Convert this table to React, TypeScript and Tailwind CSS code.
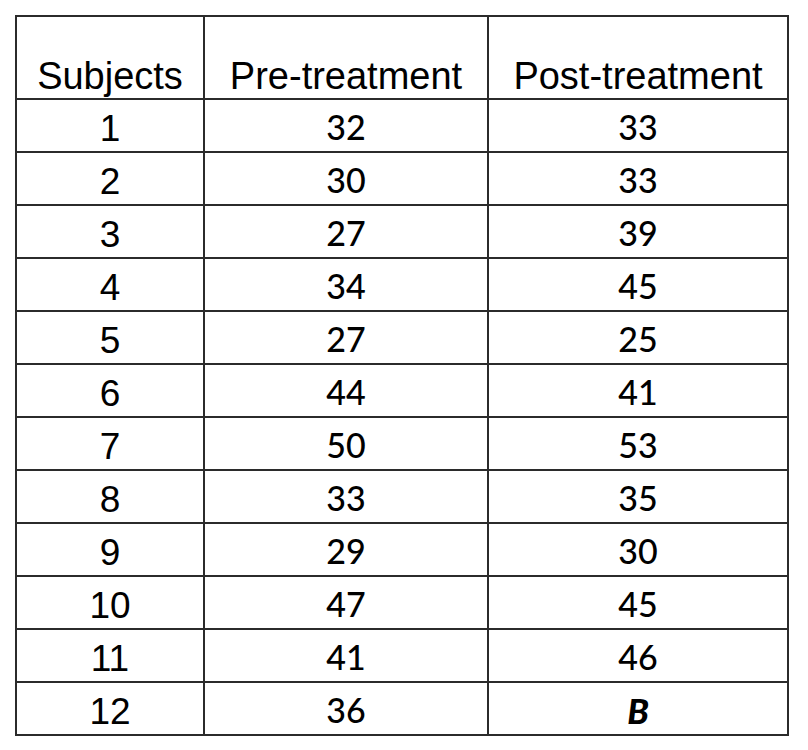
import React from "react";

const rows: [string, string, string][] = [
  ["1", "32", "33"],
  ["2", "30", "33"],
  ["3", "27", "39"],
  ["4", "34", "45"],
  ["5", "27", "25"],
  ["6", "44", "41"],
  ["7", "50", "53"],
  ["8", "33", "35"],
  ["9", "29", "30"],
  ["10", "47", "45"],
  ["11", "41", "46"],
  ["12", "36", "B"],
];

export default function App() {
  return (
    <div className="w-[808px] h-[750px] bg-white pl-[15px] pt-[15px]">
      <table className="table-fixed border-collapse w-[772px] text-black">
        <colgroup>
          <col className="w-[188px]" />
          <col className="w-[284px]" />
          <col className="w-[300px]" />
        </colgroup>
        <thead>
          <tr className="h-[83px]">
            {["Subjects", "Pre-treatment", "Post-treatment"].map((h) => (
              <th
                key={h}
                className="border-2 border-[#2b2b2b] p-0 align-bottom text-center font-normal text-[38px] leading-[38px] pb-[3px] font-['Liberation_Sans',Arial,sans-serif]"
              >
                {h}
              </th>
            ))}
          </tr>
        </thead>
        <tbody>
          {rows.map(([s, a, b]) => (
            <tr key={s} className="h-[53px]">
              <td className="border-2 border-[#2b2b2b] p-0 text-center align-middle text-[37px] leading-[37px] pt-[5px] font-['Liberation_Sans',Arial,sans-serif]">
                {s}
              </td>
              <td className="border-2 border-[#2b2b2b] p-0 text-center align-middle text-[34px] leading-[34px] pt-[3px] font-['Lato','Carlito',sans-serif] font-medium">
                {a}
              </td>
              <td className="border-2 border-[#2b2b2b] p-0 text-center align-middle text-[34px] leading-[34px] pt-[3px] font-['Lato','Carlito',sans-serif] font-medium">
                {b === "B" ? <span className="font-black italic text-[35px]">B</span> : b}
              </td>
            </tr>
          ))}
        </tbody>
      </table>
    </div>
  );
}
